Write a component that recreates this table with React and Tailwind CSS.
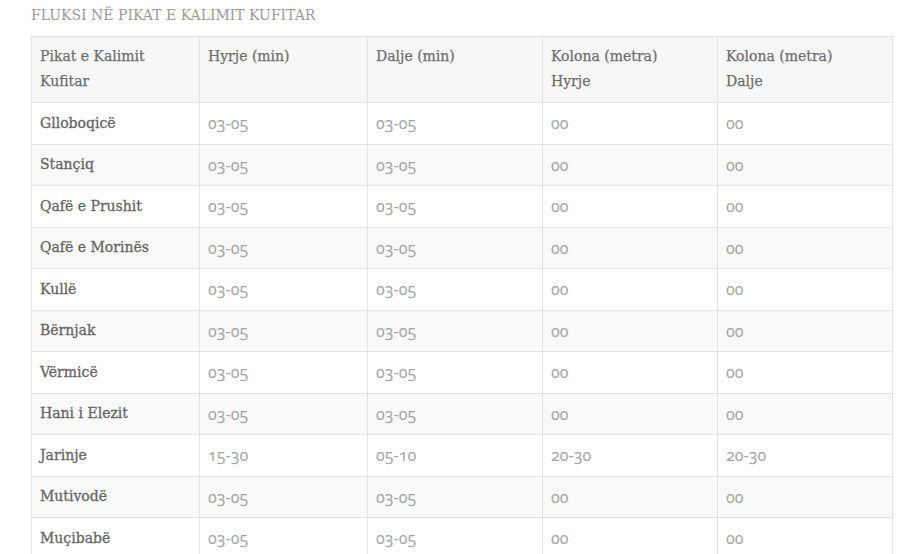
import React from "react";

const rows = [
  ["Glloboqicë", "03-05", "03-05", "00", "00"],
  ["Stançiq", "03-05", "03-05", "00", "00"],
  ["Qafë e Prushit", "03-05", "03-05", "00", "00"],
  ["Qafë e Morinës", "03-05", "03-05", "00", "00"],
  ["Kullë", "03-05", "03-05", "00", "00"],
  ["Bërnjak", "03-05", "03-05", "00", "00"],
  ["Vërmicë", "03-05", "03-05", "00", "00"],
  ["Hani i Elezit", "03-05", "03-05", "00", "00"],
  ["Jarinje", "15-30", "05-10", "20-30", "20-30"],
  ["Mutivodë", "03-05", "03-05", "00", "00"],
  ["Muçibabë", "03-05", "03-05", "00", "00"],
];

const numFont = { fontFamily: '"Noto Sans", "Open Sans", sans-serif', fontFeatureSettings: '"onum"' };

export default function App() {
  return (
    <div
      className="w-[900px] h-[554px] overflow-hidden bg-white pl-[31px] pt-[6px]"
      style={{ fontFamily: '"DejaVu Serif", "Liberation Serif", serif' }}
    >
      <div className="text-[14px] leading-[18px] text-[#9a9a9a]">
        FLUKSI NË PIKAT E KALIMIT KUFITAR
      </div>
      <table className="mt-[12px] w-[861px] table-fixed border-collapse text-[14px]">
        <colgroup>
          <col className="w-[168px]" />
          <col className="w-[168px]" />
          <col className="w-[175px]" />
          <col className="w-[175px]" />
          <col className="w-[175px]" />
        </colgroup>
        <thead>
          <tr className="bg-[#f7f7f7] h-[66px]">
            {[
              <>Pikat e Kalimit<br />Kufitar</>,
              "Hyrje (min)",
              "Dalje (min)",
              <>Kolona (metra)<br />Hyrje</>,
              <>Kolona (metra)<br />Dalje</>,
            ].map((h, i) => (
              <th
                key={i}
                className="border border-[#e3e3e3] align-top text-left font-normal text-[#6e6e6e] [-webkit-text-stroke:0.25px_#6e6e6e] leading-[25px] px-[8px] pt-[7px] pb-0"
              >
                {h}
              </th>
            ))}
          </tr>
        </thead>
        <tbody>
          {rows.map((r, ri) => (
            <tr key={ri} className={`h-[41.5px] ${ri % 2 === 1 ? "bg-[#f9f9f9]" : "bg-white"}`}>
              {r.map((c, ci) => (
                <td
                  key={ci}
                  className={`border border-[#e3e3e3] px-[8px] py-0 align-middle ${
                    ci === 0
                      ? "font-normal text-[#666666] [-webkit-text-stroke:0.3px_#666666]"
                      : "text-[16px] text-[#a6a6a6]"
                  }`}
                  style={ci === 0 ? undefined : numFont}
                >
                  {c}
                </td>
              ))}
            </tr>
          ))}
        </tbody>
      </table>
    </div>
  );
}
